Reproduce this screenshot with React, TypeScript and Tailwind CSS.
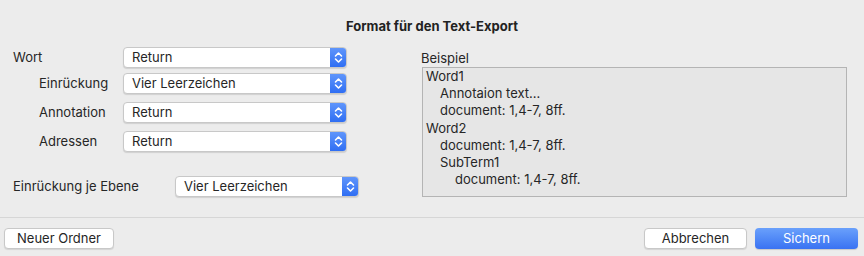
const font = { fontFamily: "Inter, 'Liberation Sans', sans-serif" };

interface PopupProps {
  value: string;
  width: string;
}

const Stepper = () => (
  <svg width="9" height="13" viewBox="0 0 9 13" fill="none" stroke="white" strokeWidth="1.6" strokeLinecap="round" strokeLinejoin="round">
    <path d="M1.5 5 L4.5 2 L7.5 5" />
    <path d="M1.5 8 L4.5 11 L7.5 8" />
  </svg>
);

const Popup = ({ value, width }: PopupProps) => (
  <div
    className={`${width} h-[21px] flex items-stretch rounded-[4px] bg-white border border-[#c8c8c8] shadow-[0_1px_1px_rgba(0,0,0,0.12)] overflow-hidden`}
  >
    <span className="flex-1 pl-[8px] leading-[19px] text-[13px] text-[#262626]">{value}</span>
    <span className="w-[16px] flex items-center justify-center bg-gradient-to-b from-[#5f95fb] to-[#2f6ef3]">
      <Stepper />
    </span>
  </div>
);

const Button = ({ label, width, primary }: { label: string; width: string; primary?: boolean }) => (
  <button
    className={
      primary
        ? `${width} h-[21px] rounded-[4px] text-[13px] text-white bg-gradient-to-b from-[#6aa0fb] to-[#3a72f2] shadow-[0_1px_1px_rgba(0,0,0,0.15)]`
        : `${width} h-[21px] rounded-[4px] text-[13px] text-[#262626] bg-white border border-[#c8c8c8] shadow-[0_1px_1px_rgba(0,0,0,0.1)]`
    }
  >
    {label}
  </button>
);

export default function App() {
  return (
    <div className="w-[864px] h-[256px] bg-[#ececec] flex flex-col text-[13px] text-[#262626]" style={font}>
      <div className="flex-1 flex flex-col">
        <h1 className="pt-[18px] leading-[16px] text-center font-bold text-[13px] text-[#222]">
          Format für den Text-Export
        </h1>

        <div className="flex mt-[13px]">
          <div className="pl-[13px] w-[421px] flex flex-col">
            <div className="flex items-center h-[21px]">
              <span className="w-[110px]">Wort</span>
              <Popup value="Return" width="w-[224px]" />
            </div>
            <div className="flex items-center h-[21px] mt-[5px]">
              <span className="w-[110px] pl-[26px]">Einrückung</span>
              <Popup value="Vier Leerzeichen" width="w-[224px]" />
            </div>
            <div className="flex items-center h-[21px] mt-[8px]">
              <span className="w-[110px] pl-[26px]">Annotation</span>
              <Popup value="Return" width="w-[224px]" />
            </div>
            <div className="flex items-center h-[21px] mt-[8px]">
              <span className="w-[110px] pl-[26px]">Adressen</span>
              <Popup value="Return" width="w-[224px]" />
            </div>
            <div className="flex items-center h-[21px] mt-[24px]">
              <span className="w-[162px]">Einrückung je Ebene</span>
              <Popup value="Vier Leerzeichen" width="w-[184px]" />
            </div>
          </div>

          <div className="flex flex-col pt-[3px]">
            <span className="leading-[16px]">Beispiel</span>
            <div className="mt-[1px] ml-[1px] w-[425px] h-[130px] border border-[#b4b4b4] bg-[#e6e6e6] pl-[3px] leading-[17.2px]">
              <div>Word1</div>
              <div className="pl-[14px]">Annotaion text...</div>
              <div className="pl-[14px]">document: 1,4-7, 8ff.</div>
              <div>Word2</div>
              <div className="pl-[14px]">document: 1,4-7, 8ff.</div>
              <div className="pl-[14px]">SubTerm1</div>
              <div className="pl-[29px]">document: 1,4-7, 8ff.</div>
            </div>
          </div>
        </div>
      </div>

      <div className="h-px bg-[#d6d6d6]" />

      <div className="h-[38px] flex items-start pt-[10px] pl-[4px] pr-[6px]">
        <Button label="Neuer Ordner" width="w-[110px]" />
        <div className="flex-1" />
        <Button label="Abbrechen" width="w-[103px]" />
        <div className="w-[8px]" />
        <Button label="Sichern" width="w-[103px]" primary />
      </div>
    </div>
  );
}
